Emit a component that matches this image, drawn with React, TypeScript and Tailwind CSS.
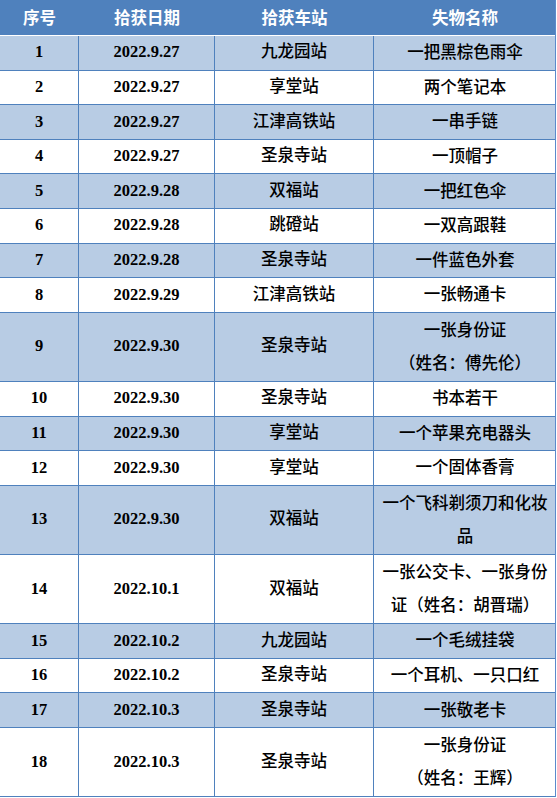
import React from "react";

type Row = { no: string; date: string; station: string; item: React.ReactNode; tall?: boolean };

const rows: Row[] = [
  { no: "1", date: "2022.9.27", station: "九龙园站", item: "一把黑棕色雨伞" },
  { no: "2", date: "2022.9.27", station: "享堂站", item: "两个笔记本" },
  { no: "3", date: "2022.9.27", station: "江津高铁站", item: "一串手链" },
  { no: "4", date: "2022.9.27", station: "圣泉寺站", item: "一顶帽子" },
  { no: "5", date: "2022.9.28", station: "双福站", item: "一把红色伞" },
  { no: "6", date: "2022.9.28", station: "跳磴站", item: "一双高跟鞋" },
  { no: "7", date: "2022.9.28", station: "圣泉寺站", item: "一件蓝色外套" },
  { no: "8", date: "2022.9.29", station: "江津高铁站", item: "一张畅通卡" },
  {
    no: "9",
    date: "2022.9.30",
    station: "圣泉寺站",
    item: (
      <>
        一张身份证
        <br />（姓名：傅先伦）
      </>
    ),
    tall: true,
  },
  { no: "10", date: "2022.9.30", station: "圣泉寺站", item: "书本若干" },
  { no: "11", date: "2022.9.30", station: "享堂站", item: "一个苹果充电器头" },
  { no: "12", date: "2022.9.30", station: "享堂站", item: "一个固体香膏" },
  { no: "13", date: "2022.9.30", station: "双福站", item: "一个飞科剃须刀和化妆品", tall: true },
  { no: "14", date: "2022.10.1", station: "双福站", item: "一张公交卡、一张身份证（姓名：胡晋瑞）", tall: true },
  { no: "15", date: "2022.10.2", station: "九龙园站", item: "一个毛绒挂袋" },
  { no: "16", date: "2022.10.2", station: "圣泉寺站", item: "一个耳机、一只口红" },
  { no: "17", date: "2022.10.3", station: "圣泉寺站", item: "一张敬老卡" },
  {
    no: "18",
    date: "2022.10.3",
    station: "圣泉寺站",
    item: (
      <>
        一张身份证
        <br />（姓名：王辉）
      </>
    ),
    tall: true,
  },
];

const num = { fontFamily: '"Liberation Serif", "Times New Roman", serif' };
const cjk = { fontFamily: '"Liberation Serif", "Noto Sans CJK SC", serif' };
const head = { fontFamily: '"Noto Sans CJK SC", sans-serif' };

export default function App() {
  return (
    <div className="w-[557px] h-[798px] bg-white overflow-hidden">
      <div className="w-[556px] border-r border-[#5b8acb]">
        <div
          className="grid grid-cols-[79px_136px_159px_182px] h-[36px] bg-[#4f81bd] border-b border-white text-white font-bold text-[16.5px]"
          style={head}
        >
          <div className="flex items-center justify-center">序号</div>
          <div className="flex items-center justify-center">拾获日期</div>
          <div className="flex items-center justify-center">拾获车站</div>
          <div className="flex items-center justify-center">失物名称</div>
        </div>
        {rows.map((r, i) => (
          <div
            key={r.no}
            className={`grid grid-cols-[79px_136px_159px_182px] border-b border-[#4f81bd] text-black ${
              r.tall ? "h-[69.2px]" : "h-[34.6px]"
            } ${i % 2 === 0 ? "bg-[#b8cce4]" : "bg-white"}`}
          >
            <div
              className="flex items-center justify-center border-r border-[#4f81bd] font-bold text-[16.5px]"
              style={num}
            >
              {r.no}
            </div>
            <div
              className="flex items-center justify-center border-r border-[#4f81bd] font-bold text-[16.5px]"
              style={num}
            >
              {r.date}
            </div>
            <div
              className="flex items-center justify-center border-r border-[#4f81bd] font-medium text-[16.5px]"
              style={cjk}
            >
              {r.station}
            </div>
            <div
              className="flex items-center justify-center text-center px-[5px] font-medium text-[16.5px] leading-[33px]"
              style={cjk}
            >
              <div>{r.item}</div>
            </div>
          </div>
        ))}
      </div>
    </div>
  );
}
